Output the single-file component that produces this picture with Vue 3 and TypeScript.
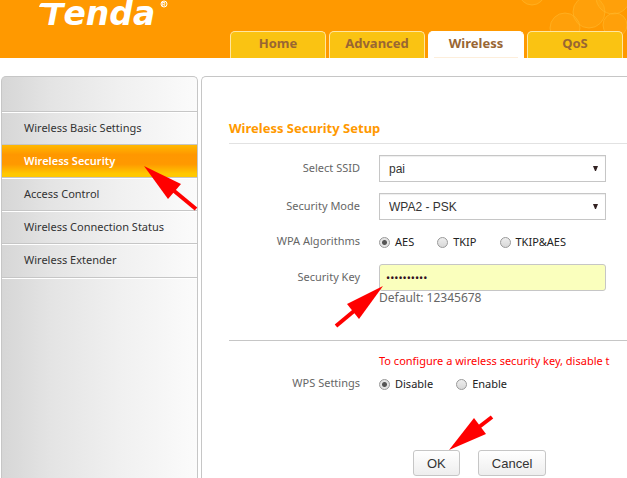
<script setup lang="ts">
import { ref } from 'vue'

const tabs = ['Home', 'Advanced', 'Wireless', 'QoS']
const activeTab = 'Wireless'

const menu = [
  'Wireless Basic Settings',
  'Wireless Security',
  'Access Control',
  'Wireless Connection Status',
  'Wireless Extender',
]
const activeItem = 'Wireless Security'

const algorithms = ['AES', 'TKIP', 'TKIP&AES']
const wpsOptions = ['Disable', 'Enable']

const ssid = ref('pai')
const mode = ref('WPA2 - PSK')
const algorithm = ref('AES')
const securityKey = ref('1234567890')
const wps = ref('Disable')
</script>

<template>
  <div class="page">
    <header class="header">
      <svg class="bubbles" width="120" height="58" viewBox="0 0 120 58" aria-hidden="true">
        <g fill="#ffb01c" fill-opacity="0.35" stroke="#ffb92e" stroke-opacity="0.6">
          <circle cx="25" cy="-8" r="13" />
          <circle cx="82" cy="12" r="16" />
          <circle cx="106" cy="-3" r="17" />
          <circle cx="58" cy="28" r="15" />
          <circle cx="108" cy="25" r="12" />
        </g>
      </svg>
      <svg class="logo" width="136" height="30" viewBox="0 0 136 30" role="img" aria-label="Tenda">
        <path d="M5 3Q3 3 2 7H14L16 3Z" />
        <text class="logo-word" x="6" y="25"><tspan class="logo-cap">T</tspan>enda</text>
        <circle class="logo-ring" cx="127" cy="4" r="3" />
        <text class="logo-mark" x="125" y="6">R</text>
      </svg>
      <nav class="tabs">
        <a v-for="tab in tabs" :key="tab" href="#" class="tab" :class="{ active: tab === activeTab }">{{ tab }}</a>
      </nav>
    </header>

    <div class="body">
      <nav class="sidebar">
        <a v-for="item in menu" :key="item" href="#" class="item" :class="{ active: item === activeItem }">{{ item }}</a>
      </nav>

      <main class="panel">
        <h1 class="title">Wireless Security Setup</h1>
        <form @submit.prevent>
          <div class="rows">
            <label class="label" for="ssid">Select SSID</label>
            <div class="select">
              <select id="ssid" v-model="ssid"><option>pai</option></select>
              <svg class="caret" width="5" height="5" viewBox="0 0 5 5" aria-hidden="true"><path d="M0 0H5L3 5H2Z" /></svg>
            </div>

            <label class="label" for="mode">Security Mode</label>
            <div class="select">
              <select id="mode" v-model="mode"><option>WPA2 - PSK</option></select>
              <svg class="caret" width="5" height="5" viewBox="0 0 5 5" aria-hidden="true"><path d="M0 0H5L3 5H2Z" /></svg>
            </div>

            <span id="alg-label" class="label">WPA Algorithms</span>
            <div class="radios" role="radiogroup" aria-labelledby="alg-label">
              <label v-for="a in algorithms" :key="a" class="radio">
                <input v-model="algorithm" type="radio" name="algorithm" :value="a">{{ a }}
              </label>
            </div>

            <label class="label" for="key">Security Key</label>
            <input id="key" v-model="securityKey" class="key" type="password" autocomplete="off">
          </div>
          <p class="hint">Default: 12345678</p>

          <div class="wps">
            <p class="warning">To configure a wireless security key, disable t</p>
            <div class="rows">
              <span id="wps-label" class="label">WPS Settings</span>
              <div class="radios" role="radiogroup" aria-labelledby="wps-label">
                <label v-for="w in wpsOptions" :key="w" class="radio">
                  <input v-model="wps" type="radio" name="wps" :value="w">{{ w }}
                </label>
              </div>
            </div>
          </div>

          <div class="actions">
            <button type="submit">OK</button>
            <button type="button">Cancel</button>
          </div>
        </form>
      </main>
    </div>

    <svg class="arrows" width="627" height="478" viewBox="0 0 627 478" aria-hidden="true">
      <g fill="#f00" stroke="#f00" stroke-width="4">
        <path stroke="none" d="M144 166L181 184L168 199Z" />
        <path d="M173 190L196 209" />
        <path stroke="none" d="M383 286L347 304L359 319Z" />
        <path d="M354 311L336 326" />
        <path stroke="none" d="M449 450L474 418L486 434Z" />
        <path d="M479 427L492 417" />
      </g>
    </svg>
  </div>
</template>

<style>
body {
  margin: 0;
  background: #fff;
}
</style>

<style scoped>
.page {
  position: relative;
  display: flex;
  flex-direction: column;
  height: 100vh;
  overflow: hidden;
  font: 11px/20px "Noto Sans", "Open Sans", sans-serif;
  color: #333;
}
.header {
  position: relative;
  display: flex;
  flex: none;
  height: 58px;
  background: #ff9900;
}
.bubbles {
  position: absolute;
  top: 0;
  right: 0;
}
.logo {
  flex: none;
  margin: 0 57px 0 37px;
  overflow: visible;
  fill: #fff;
}
.logo-word {
  font: italic bold 33px "DejaVu Sans", sans-serif;
}
.logo-cap {
  font-size: 30px;
}
.logo-ring {
  fill: none;
  stroke: #fff;
}
.logo-mark {
  font: bold 5px "Liberation Sans", sans-serif;
}
.tabs {
  position: relative;
  display: flex;
  align-self: flex-end;
  gap: 3px;
}
.tab {
  flex: none;
  width: 96px;
  height: 27px;
  box-sizing: border-box;
  border: 1px solid #ffe6a0;
  border-bottom: 0;
  border-radius: 5px 5px 0 0;
  background: #fac312;
  color: #996633;
  font-size: 13px;
  font-weight: bold;
  line-height: 23px;
  text-align: center;
  text-decoration: none;
}
.tab.active {
  border-color: #fff;
  background: linear-gradient(#fdeedb, #fdeedb) center bottom / 84px 1px no-repeat #fff;
}
.body {
  display: flex;
  flex: 1;
  gap: 3px;
  min-height: 0;
  padding: 18px 0 0 1px;
}
.sidebar {
  flex: none;
  width: 197px;
  box-sizing: border-box;
  padding-top: 34px;
  border: 1px solid #c6c6c6;
  border-bottom: 0;
  border-radius: 5px 5px 0 0;
  background: linear-gradient(90deg, #d6d6d6, #e4e4e4 25%, #f0f0f0 60%, #fbfbfb);
}
.item {
  display: block;
  height: 33px;
  box-sizing: border-box;
  padding-left: 22px;
  border-top: 1px solid #c6c6c6;
  box-shadow: inset 0 1px #fff;
  color: #333;
  line-height: 31px;
  text-decoration: none;
}
.item:last-child {
  height: 35px;
  border-bottom: 1px solid #c6c6c6;
  box-shadow: inset 0 1px #fff, 0 1px #fff;
}
.item.active {
  background: linear-gradient(#ffb900, #ff9700 30%, #ff9900 60%, #ffc800 90%);
  box-shadow: none;
  color: #fff;
  font-weight: 600;
}
.panel {
  flex: 1;
  min-width: 0;
  overflow: hidden;
  padding: 41px 0 0 27px;
  border: 1px solid #c6c6c6;
  border-width: 1px 0 0 1px;
  border-radius: 5px 0 0 0;
}
.title {
  margin: 0 0 11px;
  padding-bottom: 5px;
  border-bottom: 1px solid #e2e2e2;
  color: #ff9900;
  font-size: 13px;
  line-height: 20px;
}
.rows {
  display: grid;
  grid-template-columns: 131px 227px;
  column-gap: 19px;
  row-gap: 11px;
  align-items: center;
}
.label {
  padding-bottom: 2px;
  color: #666;
  text-align: right;
}
.select {
  display: grid;
  align-items: center;
}
.select select,
.caret {
  grid-area: 1 / 1;
}
.select select {
  width: 100%;
  height: 27px;
  padding: 0 9px;
  border: 1px solid #c6c6c6;
  border-radius: 0;
  background: #fff;
  box-shadow: inset 0 1px 1px #eee;
  color: #333;
  font: 12px "Liberation Sans", Arial, sans-serif;
  appearance: none;
}
.caret {
  justify-self: end;
  margin-right: 8px;
  fill: #322;
  pointer-events: none;
}
.radios {
  display: flex;
  gap: 23px;
  height: 22px;
}
.radio {
  display: flex;
  align-items: center;
  gap: 5px;
  color: #222;
}
.radio input {
  width: 11px;
  height: 11px;
  margin: 0;
  border: 1px solid #999;
  border-radius: 50%;
  background: linear-gradient(#eee, #d8d8d8);
  appearance: none;
}
.radio input:checked {
  background: radial-gradient(circle, #555 0 2px, #e4e4e4 3px);
}
.key {
  height: 27px;
  box-sizing: border-box;
  padding: 0 6px;
  border: 1px solid #c6c6c6;
  border-radius: 3px;
  background: #faffbd;
  color: #312;
  font: 11px "Noto Sans", sans-serif;
}
.hint {
  margin: 0 0 35px 150px;
  color: #666;
  font-size: 12px;
  line-height: 14px;
}
.wps {
  padding-top: 10px;
  border-top: 1px solid #c6c6c6;
}
.warning {
  margin: 0 0 2px 150px;
  color: #f00;
  white-space: nowrap;
}
.actions {
  display: flex;
  gap: 18px;
  margin: 55px 0 0 184px;
}
button {
  height: 26px;
  padding: 0 13px;
  border: 1px solid #c6c6c6;
  border-radius: 3px;
  background: linear-gradient(#fff, #eee);
  color: #333;
  font: 13px "Liberation Sans", Arial, sans-serif;
}
.arrows {
  position: absolute;
  top: 0;
  left: 0;
  pointer-events: none;
}
</style>
